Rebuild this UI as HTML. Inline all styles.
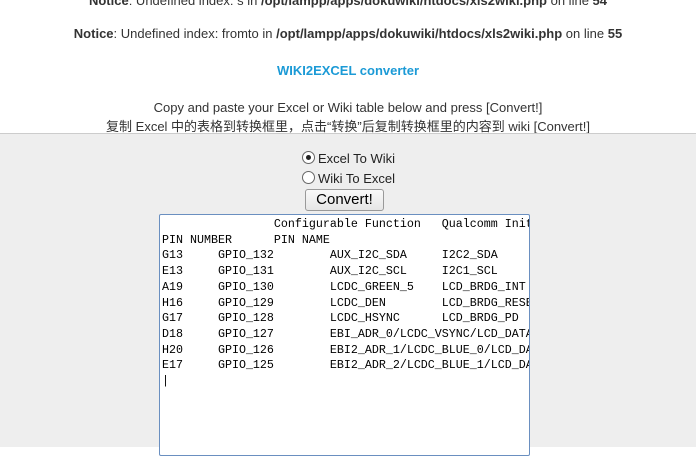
<!DOCTYPE html>
<html><head><style>
body{margin:0;width:696px;height:446px;overflow:hidden;background:#fff;font-family:"Liberation Sans","Noto Sans CJK SC",sans-serif;font-size:13px;color:#333;}
.top{background:#fff;height:133px;position:relative;text-align:center}
.top div{position:absolute;left:0;right:0;white-space:nowrap}
.gray{position:absolute;top:133px;left:0;width:696px;height:313px;background:#eee;border-top:1px solid #ccc}
.r{position:absolute;left:302px;font-size:13px;color:#222}
.rad{display:inline-block;width:11px;height:11px;border:1px solid #666;border-radius:50%;background:#fff;vertical-align:-1px;margin-right:3px;position:relative}
.dot:after{content:"";position:absolute;left:3px;top:3px;width:5px;height:5px;border-radius:50%;background:#222}
.btn{position:absolute;left:305px;top:189px;width:77px;height:20px;border:1px solid #999;border-radius:3px;background:linear-gradient(#fafafa,#e6e6e6);font-size:15px;text-align:center;line-height:20px;color:#000}
.ta{position:absolute;left:159px;top:214px;width:369px;height:240px;border:1px solid #6a8fc0;border-radius:2px;background:#fff;overflow:hidden}
pre{margin:0;padding:2px 0 0 2px;font-family:"Liberation Mono",monospace;font-size:11.67px;line-height:15.7px;color:#000}
</style></head><body>
<div class="top">
<div style="top:-7px"><b>Notice</b>: Undefined index: s in <b>/opt/lampp/apps/dokuwiki/htdocs/xls2wiki.php</b> on line <b>54</b></div>
<div style="top:26px"><b>Notice</b>: Undefined index: fromto in <b>/opt/lampp/apps/dokuwiki/htdocs/xls2wiki.php</b> on line <b>55</b></div>
<div style="top:63px;color:#1b9ad6;font-weight:bold">WIKI2EXCEL converter</div>
<div style="top:100px">Copy and paste your Excel or Wiki table below and press [Convert!]</div>
<div style="top:116px">复制 Excel 中的表格到转换框里，点击“转换”后复制转换框里的内容到 wiki [Convert!]</div>
</div>
<div class="gray"></div>
<div class="r" style="top:151px"><span class="rad dot"></span>Excel To Wiki</div>
<div class="r" style="top:171px"><span class="rad"></span>Wiki To Excel</div>
<div class="btn">Convert!</div>
<div class="ta"><pre>                Configurable Function   Qualcomm Init
PIN NUMBER      PIN NAME
G13     GPIO_132        AUX_I2C_SDA     I2C2_SDA
E13     GPIO_131        AUX_I2C_SCL     I2C1_SCL
A19     GPIO_130        LCDC_GREEN_5    LCD_BRDG_INT
H16     GPIO_129        LCDC_DEN        LCD_BRDG_RESET
G17     GPIO_128        LCDC_HSYNC      LCD_BRDG_PD
D18     GPIO_127        EBI_ADR_0/LCDC_VSYNC/LCD_DATA
H20     GPIO_126        EBI2_ADR_1/LCDC_BLUE_0/LCD_DATA
E17     GPIO_125        EBI2_ADR_2/LCDC_BLUE_1/LCD_DATA
|</pre></div>
</body></html>
